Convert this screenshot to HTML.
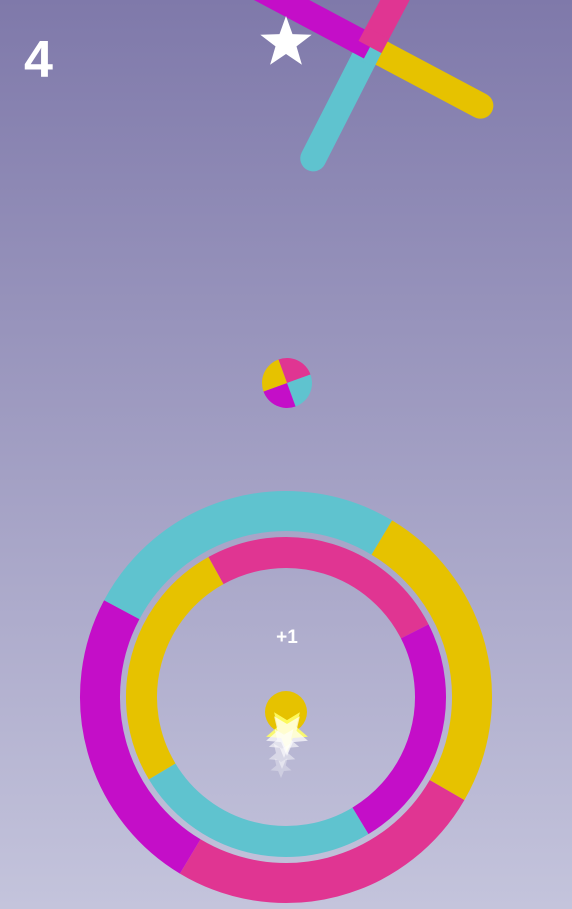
<!DOCTYPE html>
<html><head><meta charset="utf-8"><style>
html,body{margin:0;padding:0;width:572px;height:909px;overflow:hidden}
body{background:linear-gradient(#7f79aa,#c4c4dc)}
svg{position:absolute;left:0;top:0}
</style></head><body>
<svg id="s" width="572" height="909" viewBox="0 0 572 909">
<text x="24" y="77" font-family="Liberation Sans, sans-serif" font-weight="bold" font-size="52" fill="#fff">4</text>
<g id="cross"></g>
<polygon id="star" fill="#fff"/>
<g id="ball"></g>
<g id="rings"></g>
<text x="287" y="643" text-anchor="middle" font-family="Liberation Sans, sans-serif" font-weight="bold" font-size="19" fill="#fff">+1</text>
<circle cx="286" cy="712" r="21" fill="#e6c200"/>
<g id="trail"></g>
</svg>
<script>
var NS="http://www.w3.org/2000/svg";
function el(t,a,p){var e=document.createElementNS(NS,t);for(var k in a)e.setAttribute(k,a[k]);document.getElementById(p).appendChild(e);return e;}
var R=Math.PI/180;
function arc(cx,cy,r,a0,a1,col,w,p){if(a1<a0)a1+=360;var x0=cx+r*Math.cos(a0*R),y0=cy+r*Math.sin(a0*R),x1=cx+r*Math.cos(a1*R),y1=cy+r*Math.sin(a1*R);
el("path",{d:"M"+x0+" "+y0+" A"+r+" "+r+" 0 "+((a1-a0)>180?1:0)+" 1 "+x1+" "+y1,fill:"none",stroke:col,"stroke-width":w},p);}
var Y="#e6c200",C="#5fc3cf",M="#c40ec8",P="#e03592";
arc(286,697,186,30,121,P,40,"rings");arc(286,697,186,121,208,M,40,"rings");arc(286,697,186,208,301,C,40,"rings");arc(286,697,186,301,30,Y,40,"rings");
arc(286,697,144.5,241,333,P,31,"rings");arc(286,697,144.5,333,59,M,31,"rings");arc(286,697,144.5,59,149,C,31,"rings");arc(286,697,144.5,149,241,Y,31,"rings");
function wedge(cx,cy,r,a0,a1,col,p){var x0=cx+r*Math.cos(a0*R),y0=cy+r*Math.sin(a0*R),x1=cx+r*Math.cos(a1*R),y1=cy+r*Math.sin(a1*R);
el("path",{d:"M"+cx+" "+cy+" L"+x0+" "+y0+" A"+r+" "+r+" 0 0 1 "+x1+" "+y1+"Z",fill:col},p);}
wedge(287,383,25,-110,-20,P,"ball");wedge(287,383,25,-20,70,C,"ball");wedge(287,383,25,70,160,M,"ball");wedge(287,383,25,160,250,Y,"ball");
var cx=370,cy=47,arms=[[28,Y],[117,C],[208,M],[298,P]];
arms.forEach(function(a){
var x=cx+125*Math.cos(a[0]*R),y=cy+125*Math.sin(a[0]*R);
el("line",{x1:cx+14*Math.cos(a[0]*R),y1:cy+14*Math.sin(a[0]*R),x2:x,y2:y,stroke:a[1],"stroke-width":26,"stroke-linecap":"round"},"cross");});
arms.forEach(function(a){
var x=cx+16*Math.cos(a[0]*R),y=cy+16*Math.sin(a[0]*R);
el("line",{x1:cx,y1:cy,x2:x,y2:y,stroke:a[1],"stroke-width":26},"cross");});
function starPts(x,y,ro,ri,rot){var s=[];for(var i=0;i<10;i++){var r=i%2?ri:ro,a=(-90+rot+i*36)*R;s.push((x+r*Math.cos(a)).toFixed(1)+","+(y+r*Math.sin(a)).toFixed(1));}return s.join(" ");}
document.getElementById("star").setAttribute("points",starPts(286,43,27,11,0));
[[287,730,22,0.9,"#ffff66"],[284,742,16,0.6,"#fff"],[282,755,14,0.45,"#fff"],[281,767,11,0.3,"#fff"]].forEach(function(t){
el("polygon",{points:starPts(t[0],t[1],t[2],t[2]*0.45,180),fill:t[4],opacity:t[3]},"trail");});
el("polygon",{points:starPts(287,734,22,10,180),fill:"#fff",opacity:0.7},"trail");
</script>
</body></html>
